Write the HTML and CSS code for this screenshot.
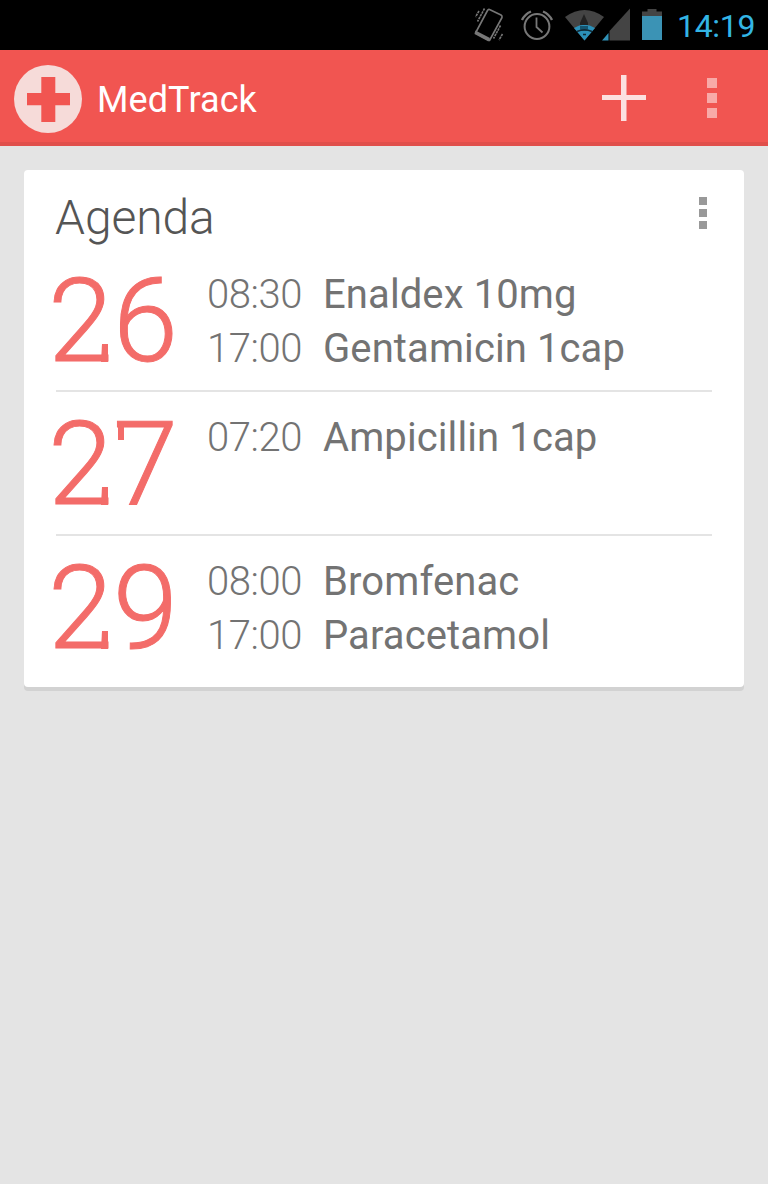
FILE: index.html
```html
<!DOCTYPE html>
<html lang="en">
<head>
<meta charset="utf-8">
<title>MedTrack</title>
<link rel="stylesheet" href="styles.css">
</head>
<body>
<div class="status">
  <svg class="status-icons" width="192" height="50" viewBox="472 0 192 50">
    <g fill="none" stroke="#777" stroke-width="1.6">
      <path d="M489.500 9.500L501 15Q502.500 16 502 17.500L489.500 40.500L475.500 33L487.500 10.500Q488.300 9 489.500 9.500Z" stroke-linejoin="round"/>
      <path d="M475.500 30.500L490 38L488.500 41.500L474.500 34Z" fill="#777" stroke="none"/>
      <path d="M479 11L475.500 17M484.500 8.500L477.500 21.500M500.500 25.500L493.500 38.500M502.500 34L499 40" stroke-dasharray="2.500 .7"/>
    </g>
    <g fill="none" stroke="#777" stroke-width="2">
      <circle cx="537" cy="26.500" r="12.400"/>
      <path d="M536.500 17.500V27L542.500 32.500" stroke-width="1.800"/>
      <path d="M522 20Q525 14 531 11.500M543 11.500Q549 14 552 20" stroke-width="2.400"/>
    </g>
    <path d="M584.500 40.500L565 17Q584.500 3 604 17Z" fill="#444"/>
    <path d="M584.500 40.500L574 28Q584.500 21.500 595 28Z" fill="#2b91ba"/>
    <path d="M584 14L588 23V25H580V23Z" fill="#222"/>
    <path d="M580 26H588V29L586.500 31H581.500L580 29Z" fill="#155570"/>
    <path d="M577 31.500Q584.500 28 592 31.500M583 34.500H586" fill="none" stroke="#112a36" stroke-width="1.500"/>
    <path d="M602 40.500L608.500 33V40.500Z" fill="#3192b7"/>
    <path d="M609.500 40.500V31L630 8.500V40.500Z" fill="#444"/>
    <path d="M642 11.500H647.500V9H656.500V11.500H662V16H642Z" fill="#444"/>
    <path d="M642 16H662V40H642Z" fill="#3b93b5"/>
  </svg>
  <span class="clock">14:19</span>
</div>
<header class="bar">
  <svg class="logo" width="68" height="68" viewBox="0 0 68 68">
    <circle cx="34" cy="34" r="34" fill="#f6dbd9"/>
    <path d="M27.300 12H41.300V28H56V40.300H41.300V57H27.300V40.300H13V28H27.300Z" fill="#f15551"/>
  </svg>
  <h1 class="app-name">MedTrack</h1>
  <svg class="add" width="44" height="46" viewBox="0 0 44 46"><path d="M0 20H19V0H24.500V20H44V25H24.500V46H19V25H0Z" fill="#fce1e0"/></svg>
  <div class="dots bar-dots"><i></i><i></i><i></i></div>
</header>
<main class="card">
  <div class="card-head">
    <h2 class="card-title">Agenda</h2>
    <div class="dots card-dots"><i></i><i></i><i></i></div>
  </div>
  <section class="day">
    <div class="date"><span class="two">2</span><span>6</span></div>
    <div class="doses">
      <div class="dose"><span class="time">08:30</span><span class="drug">Enaldex 10mg</span></div>
      <div class="dose"><span class="time">17:00</span><span class="drug">Gentamicin 1cap</span></div>
    </div>
  </section>
  <section class="day">
    <div class="date"><span class="two">2</span><span class="seven">7</span></div>
    <div class="doses">
      <div class="dose"><span class="time">07:20</span><span class="drug">Ampicillin 1cap</span></div>
    </div>
  </section>
  <section class="day">
    <div class="date"><span class="two">2</span><span>9</span></div>
    <div class="doses">
      <div class="dose"><span class="time">08:00</span><span class="drug">Bromfenac</span></div>
      <div class="dose"><span class="time">17:00</span><span class="drug">Paracetamol</span></div>
    </div>
  </section>
</main>
</body>
</html>
```
FILE: styles.css
```css
* { box-sizing: border-box; }
body { margin: 0; min-height: 1184px; background: #e4e4e4; font-family: Roboto, "Liberation Sans", sans-serif; }
h1, h2 { margin: 0; }
.status { height: 50px; background: #000; display: flex; align-items: center; padding-left: 472px; }
.status-icons { flex: none; }
.clock { margin-left: 13px; padding-top: 1px; color: #33b5e5; font-size: 32px; line-height: 40px; letter-spacing: -.3px; }
.bar { height: 96px; background: #f15551; border-bottom: 4px solid #e04f4b; display: flex; align-items: flex-start; padding: 15px 51px 0 14px; }
.logo { flex: none; }
.app-name { margin-left: 15px; color: #fff; font-size: 36px; font-weight: 400; line-height: 70px; letter-spacing: .1px; }
.add { margin: 10px 61px 0 auto; }
.dots { display: flex; flex-direction: column; }
.dots i { display: block; }
.bar-dots { margin-top: 13px; gap: 5px; }
.bar-dots i { width: 10px; height: 10px; background: #f8aaa8; }
.card { height: 517px; margin: 24px 24px 0; padding: 0 32px; background: #fff; border-radius: 4px; box-shadow: 0 4px 0 #d2d2d2; }
.card-head { height: 80px; display: flex; justify-content: space-between; padding: 17px 5px 0 0; }
.card-title { margin-left: -1px; color: #555; font-size: 48px; font-weight: 300; line-height: 62px; letter-spacing: -.1px; }
.card-dots { padding-top: 10px; gap: 4px; }
.card-dots i { width: 8px; height: 8px; background: #999; }
.day { height: 144px; padding-top: 18px; display: flex; border-bottom: 2px solid #e4e4e4; }
.day:first-of-type { height: 142px; }
.day + .day { padding-top: 19px; }
.day:last-child { border-bottom: 0; }
.date { flex: none; width: 151px; display: flex; margin-left: -8px; margin-right: 8px; color: #f36c69; font-size: 117px; font-weight: 300; line-height: 107px; -webkit-text-stroke: 1px #f36c69; }
.date span { position: relative; width: 65px; }
/* slab serifs on the light numerals */
.two::after { content: ""; position: absolute; left: 53px; top: 76px; width: 7px; height: 18px; background: #f36c69; clip-path: polygon(1px 0, 100% 0, 100% 100%, 0 100%); }
.seven::after { content: ""; position: absolute; left: 5px; top: 11px; width: 6px; height: 18px; background: #f36c69; }
.dose { display: flex; height: 54px; font-size: 40px; line-height: 54px; color: #737373; white-space: nowrap; }
.time { width: 116px; font-weight: 300; letter-spacing: -.4px; }
.drug { letter-spacing: .1px; }
```
